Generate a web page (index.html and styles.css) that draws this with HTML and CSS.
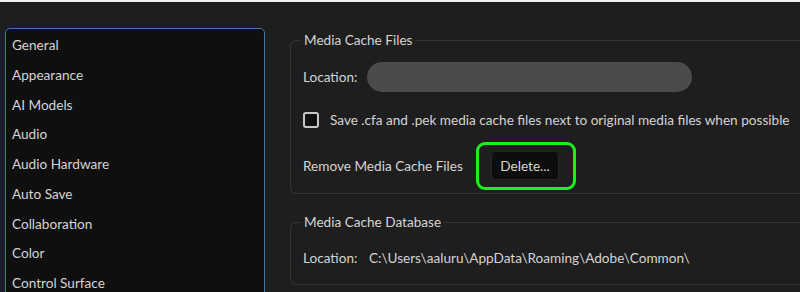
FILE: index.html
```html
<!DOCTYPE html>
<html lang="en">
<head>
<meta charset="utf-8">
<title>Preferences - Media Cache</title>
<link rel="stylesheet" href="styles.css">
</head>
<body>
<div class="topbar"></div>
<div class="window">
  <nav class="sidebar">
    <ul class="cat-list">
      <li>General</li>
      <li>Appearance</li>
      <li>AI Models</li>
      <li>Audio</li>
      <li>Audio Hardware</li>
      <li>Auto Save</li>
      <li>Collaboration</li>
      <li>Color</li>
      <li>Control Surface</li>
    </ul>
  </nav>
  <main class="content">
    <fieldset class="group group-files">
      <legend>Media Cache Files</legend>
      <div class="row row-location">
        <span class="label label-loc">Location:</span>
        <span class="path-field"></span>
      </div>
      <label class="row row-check">
        <span class="checkbox"></span>
        <span>Save .cfa and .pek media cache files next to original media files when possible</span>
      </label>
      <div class="row row-remove">
        <span class="label label-remove">Remove Media Cache Files</span>
        <span class="highlight"><button class="btn" type="button">Delete...</button></span>
      </div>
    </fieldset>
    <fieldset class="group group-db">
      <legend>Media Cache Database</legend>
      <div class="row row-db">
        <span class="label label-loc">Location:</span>
        <span class="path">C:\Users\aaluru\AppData\Roaming\Adobe\Common\</span>
      </div>
    </fieldset>
  </main>
</div>
</body>
</html>
```
FILE: styles.css
```css
html, body {
  margin: 0;
  padding: 0;
  background: #1e1e1e;
  overflow: hidden;
  height: 292px;
}
body {
  font-family: "Lato", "Open Sans", sans-serif;
  font-size: 13.6px;
  color: #d4d4d4;
}
.topbar {
  height: 2px;
  background: #f2f2f2;
}
.window {
  display: flex;
  padding-top: 26px;
  align-items: flex-start;
}
.sidebar {
  margin-left: 5px;
  width: 260px;
  height: 300px;
  box-sizing: border-box;
  flex: none;
  background: #0f0f0f;
  border: 1.5px solid #3f75b5;
  border-radius: 5px;
}
.cat-list {
  list-style: none;
  margin: 0;
  padding: 2px 0 0 6px;
}
.cat-list li {
  height: 29.75px;
  line-height: 29.75px;
}
.content {
  margin-left: 25px;
  width: 620px;
  flex: none;
  display: flex;
  flex-direction: column;
  gap: 18px;
  margin-top: 2px;
}
.group {
  margin: 0;
  border: 1px solid #363636;
  border-radius: 6px;
  padding: 0 0 0 12px;
  min-width: 0;
}
.group legend {
  margin-left: -2px;
  padding: 0 3px;
  line-height: 20px;
  color: #d4d4d4;
}
.group-files {
  padding-top: 12px;
  padding-bottom: 13px;
}
.row {
  display: flex;
  align-items: center;
}
.label-loc {
  width: 54px;
  flex: none;
}
.row-location {
  height: 30px;
}
.path-field {
  margin-left: 10px;
  width: 325px;
  height: 30px;
  border-radius: 15px;
  background: #4b4b4b;
}
.row-check {
  height: 30px;
  margin-top: 13px;
}
.checkbox {
  width: 16px;
  height: 16px;
  box-sizing: border-box;
  border: 2px solid #c8c8c8;
  border-radius: 3px;
  background: #111;
  margin-right: 11px;
  flex: none;
}
.row-remove {
  height: 29px;
  margin-top: 16px;
}
.label-remove {
  width: 162px;
  flex: none;
}
.highlight {
  position: relative;
  margin-left: 26px;
  display: inline-flex;
}
.highlight::after {
  content: "";
  position: absolute;
  left: -15px;
  right: -17px;
  top: -9px;
  bottom: -10px;
  border: 3px solid #1ef01e;
  border-radius: 9px;
}
.btn {
  width: 68px;
  height: 29px;
  background: #0d0d0d;
  border: 1px solid #262626;
  border-radius: 4px;
  color: #d6d6d6;
  font: inherit;
  padding: 0;
}
.group-db {
  padding-top: 16px;
  padding-bottom: 16px;
}
.row-db {
  height: 20px;
}
.row-db .path {
  margin-left: 12px;
}
```
